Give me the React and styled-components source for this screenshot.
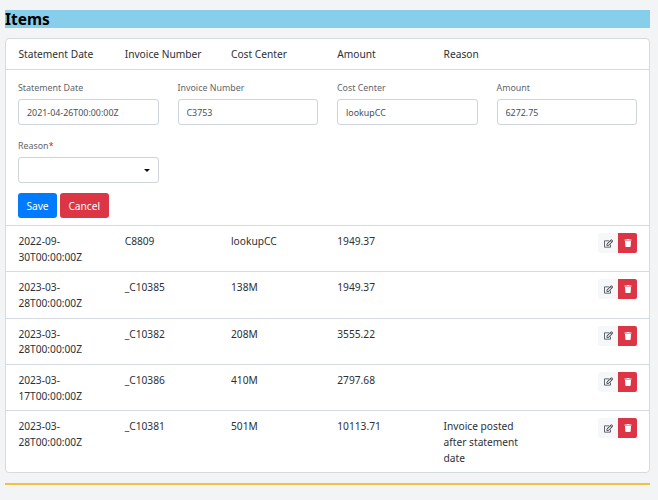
import React from "react"
import styled, { createGlobalStyle } from "styled-components"
import { FaRegEdit, FaTrash } from "react-icons/fa"

const rows = [
  { date: "2022-09-30T00:00:00Z", invoice: "C8809", center: "lookupCC", amount: "1949.37", reason: "" },
  { date: "2023-03-28T00:00:00Z", invoice: "_C10385", center: "138M", amount: "1949.37", reason: "" },
  { date: "2023-03-28T00:00:00Z", invoice: "_C10382", center: "208M", amount: "3555.22", reason: "" },
  { date: "2023-03-17T00:00:00Z", invoice: "_C10386", center: "410M", amount: "2797.68", reason: "" },
  { date: "2023-03-28T00:00:00Z", invoice: "_C10381", center: "501M", amount: "10113.71", reason: "Invoice posted after statement date" },
]

const fields = [
  { label: "Statement Date", value: "2021-04-26T00:00:00Z" },
  { label: "Invoice Number", value: "C3753" },
  { label: "Cost Center", value: "lookupCC" },
  { label: "Amount", value: "6272.75" },
]

export default function App() {
  return (
    <Page>
      <GlobalStyle />
      <Title>Items</Title>
      <Card>
        <HeaderRow>
          <span>Statement Date</span>
          <span>Invoice Number</span>
          <span>Cost Center</span>
          <span>Amount</span>
          <span>Reason</span>
        </HeaderRow>
        <Form>
          <FieldGrid>
            {fields.map((f) => (
              <Field key={f.label}>
                <Label>{f.label}</Label>
                <Input defaultValue={f.value} />
              </Field>
            ))}
            <Field>
              <Label>
                Reason<Required>*</Required>
              </Label>
              <SelectBox>
                <Caret />
              </SelectBox>
            </Field>
          </FieldGrid>
          <Buttons>
            <Button $bg="#007bff">Save</Button>
            <Button $bg="#dc3545">Cancel</Button>
          </Buttons>
        </Form>
        {rows.map((r) => (
          <Row key={r.invoice}>
            <Cell>{r.date}</Cell>
            <Cell>{r.invoice}</Cell>
            <Cell>{r.center}</Cell>
            <Cell>{r.amount}</Cell>
            <Cell>{r.reason}</Cell>
            <Actions>
              <EditButton>
                <FaRegEdit />
              </EditButton>
              <DeleteButton>
                <FaTrash />
              </DeleteButton>
            </Actions>
          </Row>
        ))}
      </Card>
      <Rule />
    </Page>
  )
}

const GlobalStyle = createGlobalStyle`
  body {
    margin: 0;
    background: #f3f4f6;
    font-family: "Noto Sans", "Open Sans", sans-serif;
    color: #212529;
  }
`
const Page = styled.div`
  box-sizing: border-box;
  width: 658px;
  height: 500px;
  padding: 10px 8px 0 5px;
  overflow: hidden;
`
const Title = styled.h2`
  margin: 0 0 10px;
  height: 18px;
  background: #87ceeb;
  color: #000;
  font-size: 15.5px;
  font-weight: 700;
  line-height: 18px;
`
const Card = styled.div`
  background: #fff;
  border: 1px solid #d5dbe1;
  border-radius: 4px;
`
const columns = `
  display: grid;
  grid-template-columns: repeat(5, 106.3px) 1fr;
  padding-left: 12.4px;
  padding-right: 12px;
  font-size: 10.2px;
`
const HeaderRow = styled.div`
  ${columns}
  height: 30px;
  align-items: center;
  border-bottom: 1px solid #d5dbe1;
  color: #2b3036;
`
const Form = styled.div`
  padding: 12px 12px 0;
  height: 155px;
  box-sizing: border-box;
`
const FieldGrid = styled.div`
  display: grid;
  grid-template-columns: repeat(4, 140.5px);
  column-gap: 19px;
  row-gap: 15px;
`
const Field = styled.div`
  display: flex;
  flex-direction: column;
`
const Label = styled.label`
  font-size: 8.9px;
  line-height: 12px;
  margin-bottom: 5px;
  color: #5f666d;
`
const Required = styled.span`
  color: #e0202f;
`
const Input = styled.input`
  box-sizing: border-box;
  width: 100%;
  height: 26px;
  padding: 0 8px;
  border: 1px solid #ced4da;
  border-radius: 3px;
  background: #fff;
  color: #495057;
  font-family: inherit;
  font-size: 8.9px;
  outline: none;
`
const SelectBox = styled.div`
  box-sizing: border-box;
  height: 26px;
  border: 1px solid #ced4da;
  border-radius: 3px;
  background: #fff;
  display: flex;
  align-items: center;
  justify-content: flex-end;
  padding-right: 8px;
`
const Caret = styled.span`
  width: 0;
  height: 0;
  border-left: 3px solid transparent;
  border-right: 3px solid transparent;
  border-top: 3px solid #111;
`
const Buttons = styled.div`
  display: flex;
  gap: 3px;
  margin-top: 10px;
`
const Button = styled.button`
  height: 25px;
  padding: 0 8.4px;
  border: none;
  border-radius: 3px;
  background: ${(p) => p.$bg};
  color: #fff;
  font-family: inherit;
  font-size: 10.2px;
`
const Row = styled.div`
  ${columns}
  border-top: 1px solid #d5dbe1;
  padding-top: 7px;
  padding-bottom: 6px;
  line-height: 15.65px;
`
const Cell = styled.div`
  color: #2b3036;
  padding: 1px 20px 0 0;
`
const Actions = styled.div`
  display: flex;
  justify-content: flex-end;
  align-items: flex-start;
`
const IconButton = styled.button`
  width: 20px;
  height: 20px;
  border: none;
  padding: 0;
  display: flex;
  align-items: center;
  justify-content: center;
  font-size: 9px;
`
const EditButton = styled(IconButton)`
  background: #f6f7f9;
  color: #343a40;
  border-radius: 3px 0 0 3px;
`
const DeleteButton = styled(IconButton)`
  width: 19px;
  background: #dc3545;
  color: #fff;
  font-size: 8px;
  border-radius: 0 2px 2px 0;
`
const Rule = styled.div`
  margin-top: 9.4px;
  height: 2px;
  background: #f0c040;
`
